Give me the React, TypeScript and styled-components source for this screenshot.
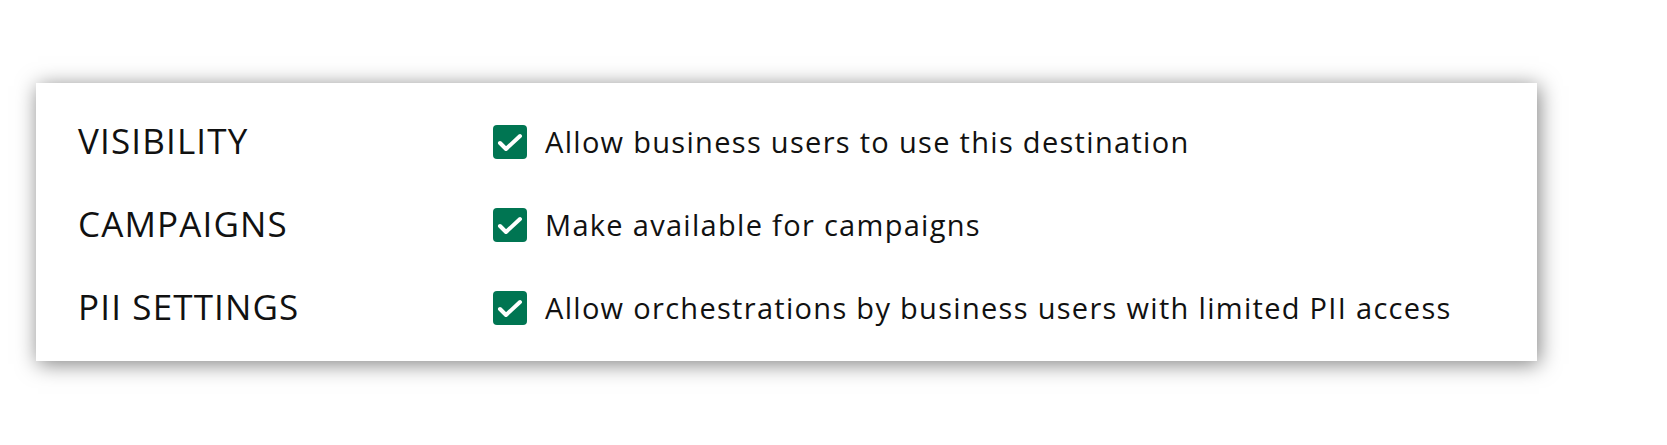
import React from "react";
import styled, { createGlobalStyle } from "styled-components";

const GlobalStyle = createGlobalStyle`
  html, body {
    margin: 0;
    padding: 0;
    background: #ffffff;
  }
  body {
    font-family: "Open Sans", "Noto Sans", sans-serif;
    color: #111111;
  }
`;

const Page = styled.div`
  width: 1667px;
  height: 445px;
  padding: 83px 0 0 36px;
  box-sizing: border-box;
`;

const SettingsCard = styled.div`
  width: 1501px;
  height: 278px;
  box-sizing: border-box;
  background: #ffffff;
  box-shadow: 2px 3px 20px rgba(0, 0, 0, 0.5);
  padding: 17px 0 0 42px;
  display: grid;
  grid-template-columns: 415px 1fr;
  grid-auto-rows: 83px;
  align-items: center;
`;

const Label = styled.div`
  font-size: 35px;
  font-weight: 400;
  letter-spacing: 1.15px;
  text-transform: uppercase;
  margin-top: -3px;
`;

const Option = styled.label`
  display: flex;
  align-items: center;
  gap: 18px;
  font-size: 29px;
  letter-spacing: 1.3px;
`;

const Box = styled.span`
  width: 34px;
  height: 34px;
  border-radius: 4px;
  background: #007552;
  display: flex;
  align-items: center;
  justify-content: center;
  flex-shrink: 0;
`;

interface IRow {
  label: string;
  text: string;
}

const rows: IRow[] = [
  { label: "Visibility", text: "Allow business users to use this destination" },
  { label: "Campaigns", text: "Make available for campaigns" },
  {
    label: "PII Settings",
    text: "Allow orchestrations by business users with limited PII access",
  },
];

const Check: React.FunctionComponent = () => (
  <Box>
    <svg width="34" height="34" viewBox="0 0 34 34">
      <path
        d="M7 18 L13 24 L27 11"
        fill="none"
        stroke="#ffffff"
        strokeWidth="4"
        strokeLinecap="round"
        strokeLinejoin="round"
      />
    </svg>
  </Box>
);

const App: React.FunctionComponent = () => {
  return (
    <>
      <GlobalStyle />
      <Page>
        <SettingsCard>
          {rows.map((row) => (
            <React.Fragment key={row.label}>
              <Label>{row.label}</Label>
              <Option>
                <Check />
                {row.text}
              </Option>
            </React.Fragment>
          ))}
        </SettingsCard>
      </Page>
    </>
  );
};

export default App;
